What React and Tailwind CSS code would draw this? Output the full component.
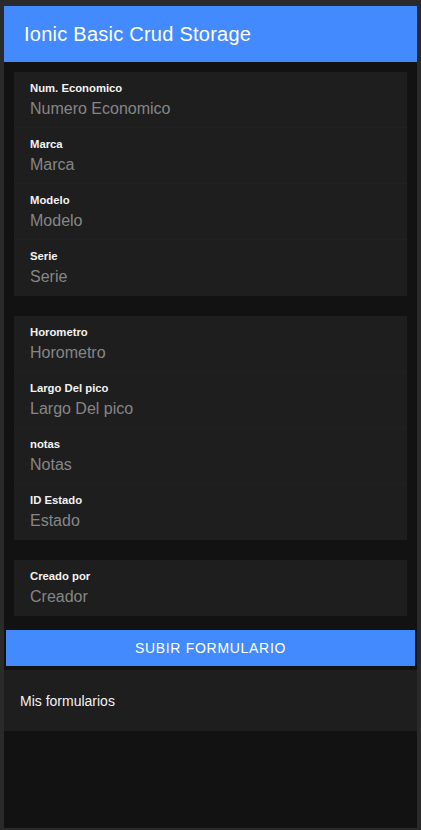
import React from 'react'

const groups = [
  [
    ['Num. Economico', 'Numero Economico'],
    ['Marca', 'Marca'],
    ['Modelo', 'Modelo'],
    ['Serie', 'Serie'],
  ],
  [
    ['Horometro', 'Horometro'],
    ['Largo Del pico', 'Largo Del pico'],
    ['notas', 'Notas'],
    ['ID Estado', 'Estado'],
  ],
  [['Creado por', 'Creador']],
]

const Field = ({ label, placeholder }) => (
  <div className="h-[56px] pl-4 border-b border-[#212121] last:border-b-0 flex flex-col">
    <span className="mt-[9px] text-[11.3px] leading-[14px] font-bold text-[#f2f2f2]">{label}</span>
    <input
      placeholder={placeholder}
      className="mt-[4px] bg-transparent outline-none text-[16px] leading-[20px] text-white placeholder:text-[#868686]"
    />
  </div>
)

const App = () => {
  return (
    <div
      className="w-[421px] h-[830px] bg-[#2a2a2a] pt-[6px] px-[4px] pb-[2px]"
      style={{ fontFamily: '"Liberation Sans", Arial, sans-serif' }}
    >
      <div className="h-full bg-[#121212] flex flex-col">
        <header className="h-[56px] bg-[#448aff] flex items-center px-5 shrink-0">
          <h1 className="text-[20px] font-medium text-white tracking-[0.25px]">Ionic Basic Crud Storage</h1>
        </header>

        <div className="flex flex-col gap-5 px-[10px] pt-[10px]">
          {groups.map((g, i) => (
            <div key={i} className="bg-[#1e1e1e] flex flex-col">
              {g.map(([label, ph]) => (
                <Field key={label} label={label} placeholder={ph} />
              ))}
            </div>
          ))}
        </div>

        <button className="mt-[14px] mx-[2px] h-[36px] bg-[#448aff] text-white text-[14px] tracking-[0.7px] uppercase">
          Subir formulario
        </button>

        <div className="mt-[4px] h-[61px] bg-[#1e1e1e] flex items-center px-4 pt-[2px] text-[14px] text-[#f2f2f2]">
          Mis formularios
        </div>
      </div>
    </div>
  )
}

export default App
